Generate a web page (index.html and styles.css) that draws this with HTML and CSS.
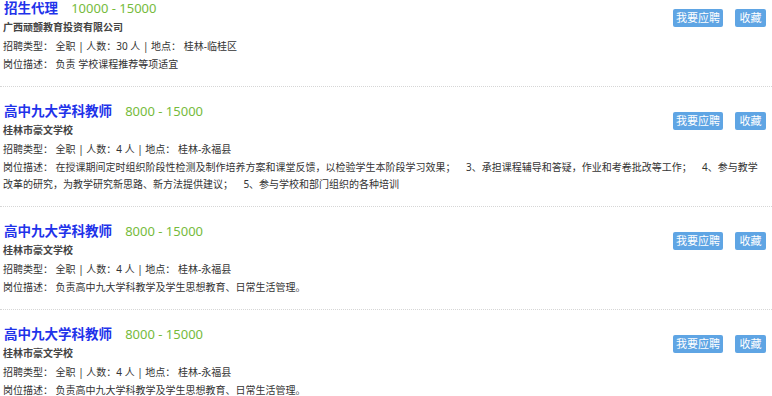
FILE: index.html
```html
<!DOCTYPE html>
<html>
<head>
  <meta charset="UTF-8">
  <title>招聘信息</title>
  <link rel="stylesheet" href="styles.css">
</head>
<body>
<div class="job-list">
  <div class="job">
    <div class="job-ops">
      <a class="btn btn-apply">我要应聘</a>
      <a class="btn btn-fav">收藏</a>
    </div>
    <div class="job-title">
      <span class="name">招生代理</span>
      <span class="salary">10000 - 15000</span>
    </div>
    <div class="company">广西顽颤教育投资有限公司</div>
    <div class="meta">招聘类型： 全职 | 人数：30 人 | 地点： 桂林-临桂区</div>
    <div class="desc">岗位描述： 负责 学校课程推荐等项适宜</div>
  </div>
  <div class="job">
    <div class="job-ops">
      <a class="btn btn-apply">我要应聘</a>
      <a class="btn btn-fav">收藏</a>
    </div>
    <div class="job-title">
      <span class="name">高中九大学科教师</span>
      <span class="salary">8000 - 15000</span>
    </div>
    <div class="company">桂林市豪文学校</div>
    <div class="meta">招聘类型： 全职 | 人数：4 人 | 地点： 桂林-永福县</div>
    <div class="desc">岗位描述： 在授课期间定时组织阶段性检测及制作培养方案和课堂反馈，以检验学生本阶段学习效果；&nbsp;&nbsp;&nbsp; 3、承担课程辅导和答疑，作业和考卷批改等工作；&nbsp;&nbsp;&nbsp; 4、参与教学改革的研究，为教学研究新思路、新方法提供建议；&nbsp;&nbsp;&nbsp; 5、参与学校和部门组织的各种培训</div>
  </div>
  <div class="job">
    <div class="job-ops">
      <a class="btn btn-apply">我要应聘</a>
      <a class="btn btn-fav">收藏</a>
    </div>
    <div class="job-title">
      <span class="name">高中九大学科教师</span>
      <span class="salary">8000 - 15000</span>
    </div>
    <div class="company">桂林市豪文学校</div>
    <div class="meta">招聘类型： 全职 | 人数：4 人 | 地点： 桂林-永福县</div>
    <div class="desc">岗位描述： 负责高中九大学科教学及学生思想教育、日常生活管理。</div>
  </div>
  <div class="job">
    <div class="job-ops">
      <a class="btn btn-apply">我要应聘</a>
      <a class="btn btn-fav">收藏</a>
    </div>
    <div class="job-title">
      <span class="name">高中九大学科教师</span>
      <span class="salary">8000 - 15000</span>
    </div>
    <div class="company">桂林市豪文学校</div>
    <div class="meta">招聘类型： 全职 | 人数：4 人 | 地点： 桂林-永福县</div>
    <div class="desc">岗位描述： 负责高中九大学科教学及学生思想教育、日常生活管理。</div>
  </div>
</div>
</body>
</html>
```

FILE: styles.css
```css
body {
  margin: 0;
  padding: 0;
  font-family: 'Noto Sans', 'Noto Sans CJK SC', sans-serif;
  background: #fff;
  color: #333;
}
/* 页面已向下滚动一点 */
.job-list {
  margin-top: -16px;
}
.job {
  padding: 12px 6px 13px 3px;
  border-bottom: 1px dotted #d6d6d6;
}
.job-ops {
  float: right;
  margin-top: 13px;
  display: flex;
  gap: 12px;
}
.btn {
  display: block;
  height: 18px;
  line-height: 18px;
  background: #5fa5e4;
  color: #fff;
  font-size: 11px;
  text-align: center;
  border-radius: 2px;
  cursor: pointer;
}
.btn-apply {
  width: 50px;
}
.btn-fav {
  width: 31px;
}
.job-title {
  height: 22px;
  line-height: 22px;
  padding-left: 1px;
}
.job-title .name {
  font-size: 13.5px;
  font-weight: bold;
  color: #1f33ea;
}
.job-title .salary {
  margin-left: 9px;
  font-size: 13px;
  color: #76bb3c;
}
.company {
  line-height: 19px;
  font-size: 10px;
  font-weight: bold;
  color: #444;
}
.meta {
  line-height: 19px;
  font-size: 10px;
  color: #333;
}
.desc {
  line-height: 17px;
  font-size: 10px;
  color: #333;
}
```
